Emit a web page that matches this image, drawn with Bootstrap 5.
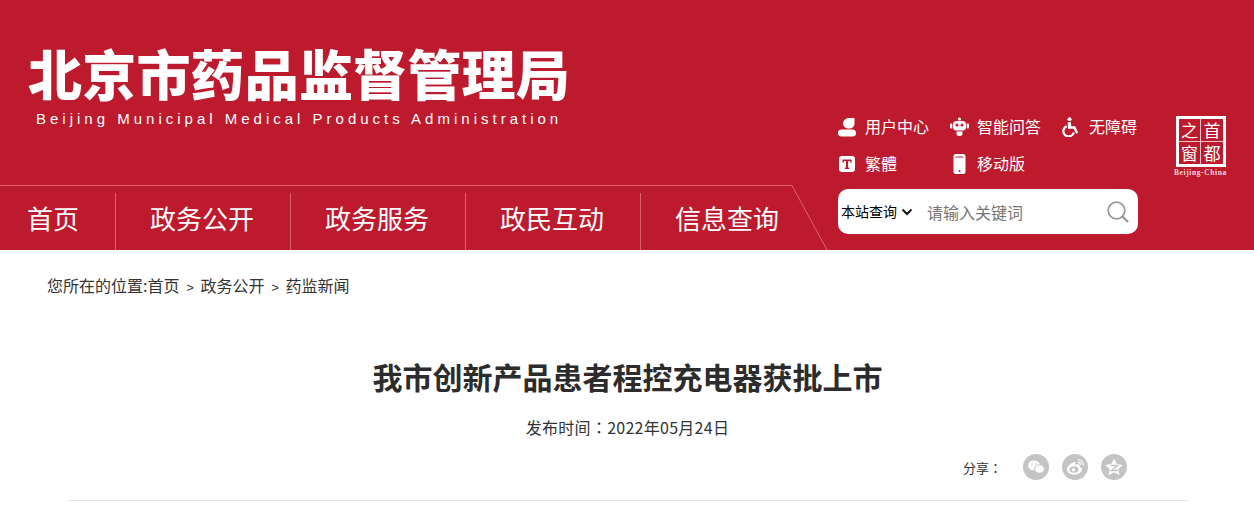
<!DOCTYPE html>
<html lang="zh-CN">
<head>
<meta charset="utf-8">
<title>我市创新产品患者程控充电器获批上市</title>
<link rel="stylesheet" href="https://cdn.jsdelivr.net/npm/bootstrap@5.3.0/dist/css/bootstrap.min.css">
<style>
html,body{overflow:hidden}
body{font-family:"Liberation Sans","Noto Sans CJK SC",sans-serif;color:#333;background:#fff}
.site-head{background:#bd1a2d;height:250px}
.head-left{width:838px;flex:none}
.brand-box{height:185px;padding:40px 0 0 28px}
.brand-cn{font-family:"Noto Sans CJK SC",sans-serif;font-weight:900;font-size:54px;letter-spacing:.2px;line-height:66px;color:#fff;margin:0;white-space:nowrap}
.brand-en{font-family:"Liberation Sans",sans-serif;font-size:15px;line-height:18px;letter-spacing:4px;color:#fff;padding:4px 0 0 8px;white-space:nowrap}
.main-nav{height:65px;position:relative;padding-top:8px}
.main-nav svg{position:absolute;left:0;top:0}
.main-link{font-family:"Noto Sans CJK SC",sans-serif;font-size:26px;line-height:50px;color:#fff;text-decoration:none;padding:0 35px 0 34px;height:57px;border-right:1px solid #d9626e;white-space:nowrap;width:175px}
.main-link:first-of-type{padding-left:27px;width:116px}
.main-link:last-of-type{border-right:0}
.tool-col{width:300px;flex:none;padding-top:107px}
.tool-row{height:37px}
.tool-item{color:#fff;text-decoration:none;font-family:"Noto Sans CJK SC",sans-serif;font-size:16px;line-height:28px;white-space:nowrap;width:112px}
.tool-item:last-child{width:76px}
.tool-item svg{flex:none;margin:2px 8px 0 0}
.find-box{height:45px;width:300px;background:#fff;border-radius:10px;margin-top:8px;padding:0 9px 0 3px}
.find-scope{font-family:"Noto Sans CJK SC",sans-serif;font-size:14px;color:#000;white-space:nowrap}
.find-text{font-family:"Noto Sans CJK SC",sans-serif;font-size:16px;color:#757575;border:0;outline:0;background:none;width:150px;margin-left:14px;padding:0}
.find-text::placeholder{color:#757575;opacity:1}
.stamp-col{margin-left:38px;padding-top:116px;width:54px;flex:none}
.stamp-grid{width:50px;height:51px;border:3px solid #fff;display:grid;grid-template-columns:1fr 1fr;grid-template-rows:1fr 1fr;font-family:"Noto Sans CJK SC",sans-serif;font-size:17px;line-height:22px;color:#fff;text-align:center}
.stamp-grid span:nth-child(odd){border-right:1px solid #f2c6cb}
.stamp-grid span:nth-child(-n+2){border-bottom:1px solid #f2c6cb}
.stamp-en{font-family:"Liberation Serif",serif;font-weight:700;font-size:7.5px;line-height:9px;color:#f4d9dc;letter-spacing:.6px;white-space:nowrap;margin-left:-2px;margin-top:1px}
.crumb-bar{padding:23px 0 0 47px;height:48px;font-family:"Noto Sans CJK SC",sans-serif;font-size:16px;line-height:24px;color:#333;white-space:nowrap}
.crumb-sep{font-family:"Liberation Sans",sans-serif;font-size:13px;line-height:0;padding:0 6.7px}
.article-head{margin:0 66px 0 67px;border-bottom:1px solid #e8e8e8;height:203px}
.article-title{font-family:"Noto Sans CJK SC",sans-serif;font-weight:700;font-size:30px;line-height:40px;color:#2c2c2c;text-align:center;margin:0;padding-top:58px;box-sizing:content-box;height:40px}
.article-date{font-family:"Noto Sans CJK SC",sans-serif;font-size:16px;letter-spacing:.27px;line-height:24px;height:24px;text-align:center;color:#333;margin-top:19px}
.wide-colon{font-family:"Noto Sans CJK TC",sans-serif;line-height:0}
.share-row{padding:15px 61px 0 0;height:50px}
.share-label{font-family:"Noto Sans CJK SC",sans-serif;font-size:13px;line-height:28px;color:#333;margin-right:8px;white-space:nowrap}
.share-dot{width:26px;height:26px;border-radius:50%;background:#c4c4c4;margin-left:13px;flex:none}
</style>
</head>
<body>
<header class="site-head d-flex">
  <div class="head-left">
    <div class="brand-box">
      <h1 class="brand-cn">北京市药品监督管理局</h1>
      <div class="brand-en">Beijing Municipal Medical Products Administration</div>
    </div>
    <nav class="main-nav d-flex">
      <svg width="838" height="65" aria-hidden="true"><path d="M0 .5H792L827 65" fill="none" stroke="#e0636f" stroke-width="1"/></svg>
      <a class="main-link" href="#">首页</a>
      <a class="main-link" href="#">政务公开</a>
      <a class="main-link" href="#">政务服务</a>
      <a class="main-link" href="#">政民互动</a>
      <a class="main-link" href="#">信息查询</a>
    </nav>
  </div>
  <div class="tool-col">
    <div class="tool-row d-flex">
      <a class="tool-item d-flex align-items-center" href="#">
        <svg width="19" height="20" viewBox="0 0 19 20"><path d="M5 6.500C5 3 8 1 12 1h4.500v5.500c0 3-2.500 5-5.500 5-3 0-6-2-6-5z" fill="#fff"/><rect x="0" y="12.500" width="18" height="7" rx="3.500" fill="#fff"/></svg>用户中心</a>
      <a class="tool-item d-flex align-items-center" href="#">
        <svg width="19" height="20" viewBox="0 0 19 20"><circle cx="9.500" cy="2" r="1.600" fill="#fff"/><rect x="3" y="4" width="13" height="9.500" rx="3.500" fill="#fff"/><rect x="0" y="6.500" width="2.300" height="5" rx="1" fill="#fff"/><rect x="16.700" y="6.500" width="2.300" height="5" rx="1" fill="#fff"/><circle cx="7" cy="8" r="1.500" fill="#bd1a2d"/><circle cx="12" cy="8" r="1.500" fill="#bd1a2d"/><path d="M6.500 14.500h6v2.500c0 1-1 2-3 2s-3-1-3-2z" fill="#fff"/></svg>智能问答</a>
      <a class="tool-item d-flex align-items-center" href="#">
        <svg width="19" height="20" viewBox="0 0 19 20"><circle cx="7.500" cy="2.200" r="2" fill="#fff"/><path d="M5.700 5.200h3.200l.3 4h4l3 6.500-2.200 1-2.300-5H6z" fill="#fff"/><path d="M4.700 9.200a5.300 5.300 0 1 0 7.100 6.200" fill="none" stroke="#fff" stroke-width="2.200"/></svg>无障碍</a>
    </div>
    <div class="tool-row d-flex">
      <a class="tool-item d-flex align-items-center" href="#">
        <svg width="19" height="20" viewBox="0 0 19 20"><rect x="1" y="2" width="16" height="16" rx="3" fill="#fff"/><path d="M4.500 5.500h9v3.200h-1.100l-.5-1.700H10.100v6.500l1.200.4V15H6.700v-1.100l1.200-.4V7H6.100l-.5 1.700H4.500z" fill="#bd1a2d"/></svg>繁體</a>
      <a class="tool-item d-flex align-items-center" href="#">
        <svg width="19" height="20" viewBox="0 0 19 20"><rect x="3.500" y="0" width="12" height="20" rx="2.500" fill="#fff"/><rect x="5.500" y="2.500" width="8" height="1" fill="#bd1a2d"/><circle cx="9.500" cy="17" r="1" fill="#bd1a2d"/></svg>移动版</a>
    </div>
    <form class="find-box d-flex align-items-center">
      <span class="find-scope">本站查询</span>
      <svg class="ms-1" width="12" height="8" viewBox="0 0 12 8"><path d="M1.500 1.500 6 6l4.500-4.500" fill="none" stroke="#111" stroke-width="2"/></svg>
      <input class="find-text" type="text" placeholder="请输入关键词">
      <svg class="ms-auto" width="22" height="22" viewBox="0 0 22 22"><circle cx="9.500" cy="9.500" r="8.300" fill="none" stroke="#999" stroke-width="1.800"/><path d="M15.500 15.500 21 21" stroke="#999" stroke-width="2.400"/></svg>
    </form>
  </div>
  <div class="stamp-col">
    <div class="stamp-grid"><span>之</span><span>首</span><span>窗</span><span>都</span></div>
    <div class="stamp-en">Beijing-China</div>
  </div>
</header>
<main>
  <div class="crumb-bar">您所在的位置:首页<span class="crumb-sep">&gt;</span>政务公开<span class="crumb-sep">&gt;</span>药监新闻</div>
  <div class="article-head">
    <h2 class="article-title">我市创新产品患者程控充电器获批上市</h2>
    <div class="article-date">发布时间<span class="wide-colon" lang="zh-TW">：</span>2022年05月24日</div>
    <div class="share-row d-flex justify-content-end align-items-start">
      <span class="share-label">分享<span class="wide-colon" lang="zh-TW">：</span></span>
      <span class="share-dot d-block">
        <svg width="26" height="26" viewBox="0 0 26 26"><ellipse cx="11" cy="11.500" rx="6" ry="5" fill="#fff"/><ellipse cx="16.500" cy="15" rx="5" ry="4.200" fill="#fff" stroke="#c4c4c4"/><circle cx="9" cy="10" r=".8" fill="#c4c4c4"/><circle cx="13" cy="10" r=".8" fill="#c4c4c4"/></svg>
      </span>
      <span class="share-dot d-block">
        <svg width="26" height="26" viewBox="0 0 26 26"><path d="M11 8.500c-3.500 1.500-6 4.500-6 7 0 3 3.500 5 7.500 5s7.500-2.500 7.500-5c0-2-2-2.500-2.500-3 .6-1.500 0-2.800-3-2-1.500.5-1.500-.500-1.200-1.500C14 7.500 12.500 8 11 8.500z" fill="#fff"/><ellipse cx="12" cy="15.500" rx="4.500" ry="3.300" fill="#c4c4c4"/><circle cx="11.500" cy="15.700" r="1.700" fill="#fff"/><path d="M16 6a4.500 4.500 0 0 1 5 5.500M16 8.500a2.200 2.200 0 0 1 2.500 2.500" fill="none" stroke="#fff" stroke-width="1.200"/></svg>
      </span>
      <span class="share-dot d-block">
        <svg width="26" height="26" viewBox="0 0 26 26"><path d="M13 4.500l2.700 5.600 6.100.8-4.500 4.200 1.200 6.100-5.500-3-5.500 3 1.200-6.100-4.500-4.200 6.100-.8z" fill="#fff"/><path d="M9.500 11.500h7l-6 5h6.500" fill="none" stroke="#c4c4c4" stroke-width="1.400"/></svg>
      </span>
    </div>
  </div>
</main>
<script src="https://cdn.jsdelivr.net/npm/bootstrap@5.3.0/dist/js/bootstrap.bundle.min.js"></script>
</body>
</html>
